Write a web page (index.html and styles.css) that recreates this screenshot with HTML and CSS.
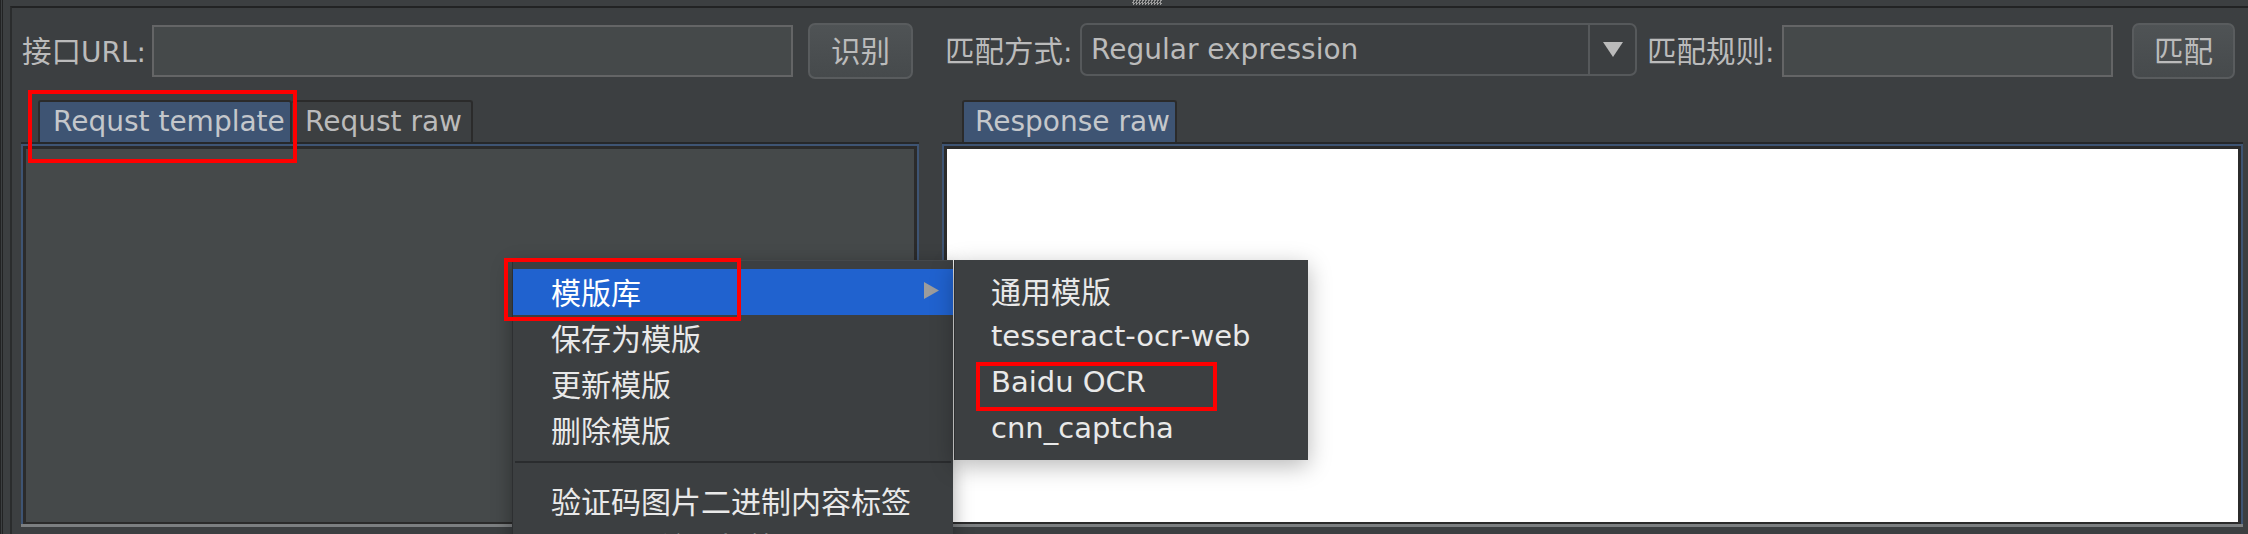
FILE: index.html
```html
<!DOCTYPE html>
<html lang="zh-CN">
<head>
<meta charset="utf-8">
<title>captcha-killer</title>
<link rel="stylesheet" href="styles.css">
</head>
<body>
<div class="app">
  <div class="topbar"><span class="grip"></span></div>
  <div class="frame">
    <div class="toolbar">
      <label class="lbl lbl-url"><span class="zh">接口</span>URL:</label>
      <div class="field inp-url"></div>
      <button class="btn btn-recog"><span class="zh">识别</span></button>
      <label class="lbl lbl-mode"><span class="zh">匹配方式</span>:</label>
      <div class="combo">
        <span class="combo-text">Regular expression</span>
        <span class="combo-arrow"><svg width="20" height="15" viewBox="0 0 20 15"><polygon points="0,0 20,0 10,15" fill="#bbbbbb"/></svg></span>
      </div>
      <label class="lbl lbl-rule"><span class="zh">匹配规则</span>:</label>
      <div class="field inp-rule"></div>
      <button class="btn btn-match"><span class="zh">匹配</span></button>
    </div>
    <div class="panes">
      <section class="pane pane-req">
        <div class="tabs tabs-req">
          <div class="tab tab-sel tab-tpl">Requst template</div>
          <div class="tab tab-raw">Requst raw</div>
        </div>
        <div class="tabbody"><div class="tabcontent content-dark"></div></div>
      </section>
      <section class="pane pane-resp">
        <div class="tabs tabs-resp">
          <div class="tab tab-sel tab-resp">Response raw</div>
        </div>
        <div class="tabbody"><div class="tabcontent content-white"></div></div>
      </section>
    </div>
  </div>

  <ul class="menu">
    <li class="mi mi-on"><span class="zh">模版库</span><svg class="sub-arrow" width="15" height="17" viewBox="0 0 15 17"><polygon points="0,0 15,8.5 0,17" fill="#9c9c9c"/></svg></li>
    <li class="mi"><span class="zh">保存为模版</span></li>
    <li class="mi"><span class="zh">更新模版</span></li>
    <li class="mi"><span class="zh">删除模版</span></li>
    <li class="sep"></li>
    <li class="mi"><span class="zh">验证码图片二进制内容标签</span></li>
    <li class="mi">Base64<span class="zh">编码标签</span></li>
  </ul>

  <ul class="submenu">
    <li class="mi"><span class="zh">通用模版</span></li>
    <li class="mi">tesseract-ocr-web</li>
    <li class="mi">Baidu OCR</li>
    <li class="mi">cnn_captcha</li>
  </ul>

  <div class="mark mark-tab"></div>
  <div class="mark mark-lib"></div>
  <div class="mark mark-baidu"></div>
</div>
</body>
</html>
```

FILE: styles.css
```css
html, body {
  margin: 0;
  padding: 0;
  background: #3c3f41;
}

.app {
  position: relative;
  width: 2248px;
  height: 534px;
  overflow: hidden;
  box-sizing: border-box;
  background: #3c3f41;
  border-left: 3px double #222324;
  font-family: "DejaVu Sans", "Noto Sans CJK SC", sans-serif;
  font-size: 28px;
  line-height: 34px;
  color: #bbbbbb;
}

.zh {
  font-family: "Noto Sans CJK SC", sans-serif;
  font-size: 29.5px;
}

/* top strip with split-pane grip */
.topbar {
  height: 6px;
  display: flex;
}
.grip {
  margin-left: 1129px;
  width: 30px;
  height: 5px;
  background: repeating-conic-gradient(#9a9a9a 0 25%, #3c3f41 0 50%) 0 0 / 3px 3px;
}

.frame {
  margin-left: 7px;
  height: 528px;
  box-sizing: border-box;
  border-top: 2px solid #222324;
  border-left: 2px solid #2a2c2d;
}

/* toolbar row */
.toolbar {
  display: flex;
  align-items: center;
  height: 56px;
  padding: 15px 0 0 10px;
}

.lbl {
  flex: none;
  white-space: nowrap;
  color: #bbbbbb;
}
.lbl-url { width: 130px; }
.lbl-mode { width: 135px; margin-left: 32px; }
.lbl-rule { width: 135px; margin-left: 10px; }

.field {
  flex: none;
  height: 52px;
  box-sizing: border-box;
  border: 2px solid #646566;
  background: #45494a;
}
.inp-url { width: 641px; }
.inp-rule { width: 331px; }

.btn {
  flex: none;
  height: 56px;
  box-sizing: border-box;
  padding: 0;
  border: 2px solid #595c5e;
  border-radius: 7px;
  background: linear-gradient(#4f5355, #464a4c);
  color: #bbbbbb;
  font: inherit;
  line-height: 34px;
}
.btn-recog { width: 105px; margin-left: 15px; }
.btn-match { width: 103px; margin-left: 19px; }

.combo {
  flex: none;
  align-self: flex-start;
  width: 557px;
  height: 53px;
  box-sizing: border-box;
  border: 2px solid #56595b;
  border-radius: 7px;
  background: #3c3f41;
  display: flex;
  align-items: center;
}
.combo-text {
  flex: 1;
  padding-left: 9px;
  color: #bbbbbb;
  white-space: nowrap;
}
.combo-arrow {
  flex: none;
  width: 47px;
  height: 100%;
  box-sizing: border-box;
  border-left: 2px solid #56595b;
  display: flex;
  align-items: center;
  justify-content: center;
}

/* tabbed panes */
.panes {
  display: flex;
  gap: 23px;
  height: 427px;
  margin-top: 21px;
  padding-left: 9px;
}
.pane {
  flex: none;
  display: flex;
  flex-direction: column;
}
.pane-req { width: 898px; }
.pane-resp { width: 1301px; }

.tabs {
  flex: none;
  height: 42px;
  display: flex;
  align-items: flex-end;
}
.tabs-req { padding-left: 17px; }
.tabs-resp { padding-left: 20px; }

.tab {
  height: 42px;
  box-sizing: border-box;
  border: 2px solid #2b2b2b;
  border-bottom: none;
  border-radius: 3px 3px 0 0;
  padding-left: 13px;
  display: flex;
  align-items: center;
  white-space: nowrap;
  color: #bbbbbb;
  background: #3c3f41;
}
.tab-sel {
  background: #3e5473;
  color: #c4c7cb;
}
.tab-tpl { width: 254px; }
.tab-raw { width: 181px; border-left: none; }
.tab-resp { width: 215px; padding-left: 11px; }

.tabbody {
  flex: 1;
  display: flex;
  box-sizing: border-box;
  border-top: 2px solid #26282a;
  border-bottom: 3px solid #7c7f81;
  background: #3e5473;
  padding: 2px 2px 0 2px;
}
.tabcontent {
  flex: 1;
  border: 3px solid #2b2b2b;
  border-bottom-width: 2px;
}
.content-dark { background: #45494a; }
.content-white { background: #ffffff; }

/* popup menus */
.menu,
.submenu {
  position: absolute;
  top: 260px;
  margin: 0;
  list-style: none;
  box-sizing: border-box;
  background: #3c3f41;
  color: #e9e9e9;
  font-size: 29px;
}
.menu .zh,
.submenu .zh {
  font-size: 30px;
}
.menu {
  left: 509px;
  width: 441px;
  height: 300px;
  padding: 8px 0 0;
  border-left: 1px solid #2d2f31;
  border-top: 1px solid #45484a;
  box-shadow: 0 6px 18px rgba(0, 0, 0, 0.35);
}
.submenu {
  left: 951px;
  width: 354px;
  height: 200px;
  padding: 8px 0;
  border-left: 1px solid #2d2f31;
  box-shadow: 0 6px 22px rgba(0, 0, 0, 0.28);
}
.mi {
  height: 46px;
  box-sizing: border-box;
  padding-bottom: 3px;
  display: flex;
  align-items: center;
  white-space: nowrap;
}
.menu .mi {
  padding-left: 38px;
  padding-right: 14px;
}
.submenu .mi {
  padding-left: 36px;
}
.mi-on {
  background: #2062cf;
  color: #ffffff;
  justify-content: space-between;
}
.sep {
  height: 2px;
  margin: 8px 2px 15px;
  background: #2a2c2e;
}

/* red annotation boxes */
.mark {
  position: absolute;
  box-sizing: border-box;
  border: 4px solid #ff0000;
}
.mark-tab { left: 25px; top: 90px; width: 269px; height: 73px; }
.mark-lib { left: 501px; top: 258px; width: 237px; height: 63px; }
.mark-baidu { left: 973px; top: 362px; width: 241px; height: 49px; }
```
